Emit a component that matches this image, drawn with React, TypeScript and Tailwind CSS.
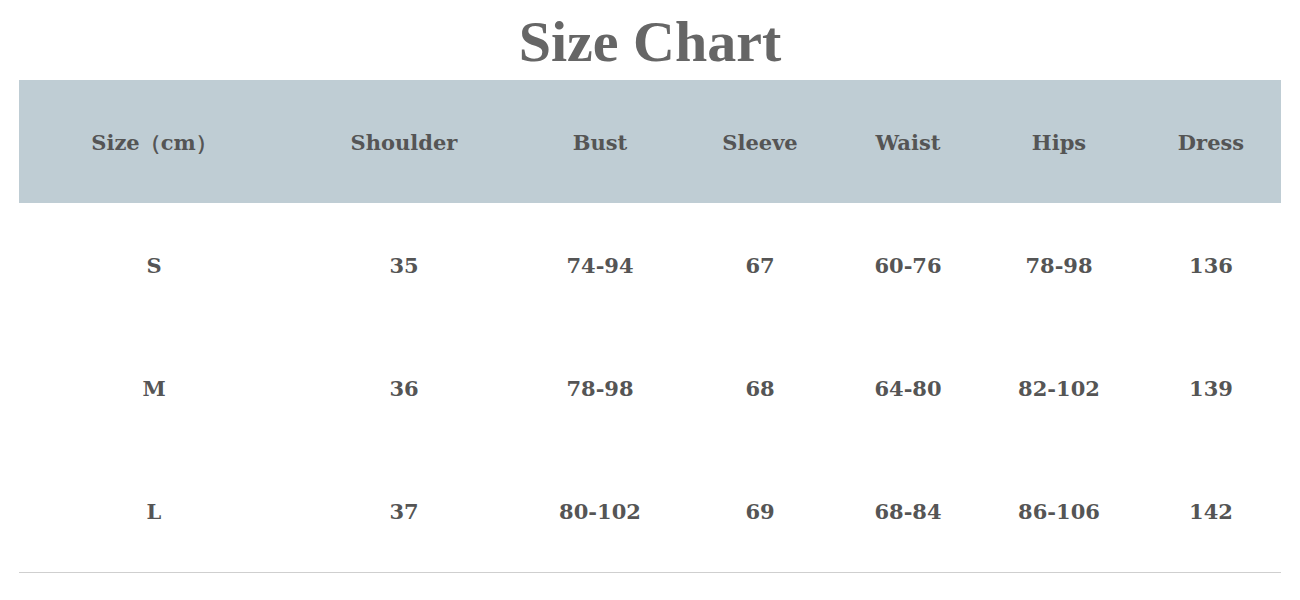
const columns = [
  { label: 'Size（cm）', width: 'w-[270px]' },
  { label: 'Shoulder', width: 'w-[230px]' },
  { label: 'Bust', width: 'w-[162px]' },
  { label: 'Sleeve', width: 'w-[158px]' },
  { label: 'Waist', width: 'w-[138px]' },
  { label: 'Hips', width: 'w-[164px]' },
  { label: 'Dress', width: 'w-[140px]' },
];

const rows = [
  ['S', '35', '74-94', '67', '60-76', '78-98', '136'],
  ['M', '36', '78-98', '68', '64-80', '82-102', '139'],
  ['L', '37', '80-102', '69', '68-84', '86-106', '142'],
];

// Tabla de tallas: cabecera gris azulada y tres filas con línea final.
export default function App() {
  return (
    <div className="h-[600px] w-[1300px] bg-white font-['DejaVu_Serif',serif] text-[#555]">
      <h1 className="flex h-[80px] items-center justify-center pt-[2px] font-['Liberation_Serif',serif] text-[58px] font-bold text-[#666]">
        Size Chart
      </h1>
      <div className="mx-[19px] border-b border-[#cfcfcf]">
        <div className="flex h-[123px] items-center bg-[#bfcdd4] pt-[2px]">
          {columns.map((c) => (
            <div key={c.label} className={`${c.width} text-center text-[21px] font-bold`}>
              {c.label}
            </div>
          ))}
        </div>
        {rows.map((r) => (
          <div key={r[0]} className="flex h-[123px] items-center pt-[2px]">
            {r.map((v, i) => (
              <div key={i} className={`${columns[i].width} text-center text-[21px] font-bold`}>
                {v}
              </div>
            ))}
          </div>
        ))}
      </div>
    </div>
  );
}
